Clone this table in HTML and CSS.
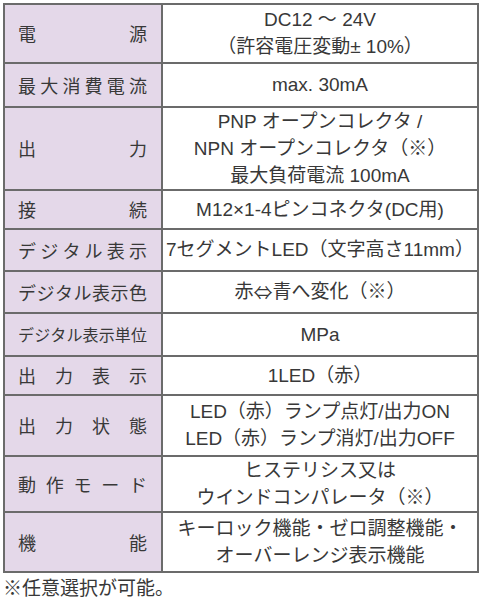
FILE: index.html
```html
<!DOCTYPE html>
<html lang="ja">
<head>
<meta charset="utf-8">
<link rel="stylesheet" href="styles.css">
</head>
<body>
<div class="spec">
  <div class="label"><span>電</span><span>源</span></div>
  <div class="value">DC12 ～ 24V<br>（許容電圧変動± 10%）</div>

  <div class="label"><span>最</span><span>大</span><span>消</span><span>費</span><span>電</span><span>流</span></div>
  <div class="value">max. 30mA</div>

  <div class="label"><span>出</span><span>力</span></div>
  <div class="value">PNP オープンコレクタ /<br>NPN オープンコレクタ（※）<br>最大負荷電流 100mA</div>

  <div class="label"><span>接</span><span>続</span></div>
  <div class="value">M12×1-4ピンコネクタ(DC用)</div>

  <div class="label"><span>デ</span><span>ジ</span><span>タ</span><span>ル</span><span>表</span><span>示</span></div>
  <div class="value">7セグメントLED（文字高さ11mm）</div>

  <div class="label"><span>デ</span><span>ジ</span><span>タ</span><span>ル</span><span>表</span><span>示</span><span>色</span></div>
  <div class="value">赤<span class="sym">⇔</span>青へ変化（※）</div>

  <div class="label small"><span>デ</span><span>ジ</span><span>タ</span><span>ル</span><span>表</span><span>示</span><span>単</span><span>位</span></div>
  <div class="value">MPa</div>

  <div class="label"><span>出</span><span>力</span><span>表</span><span>示</span></div>
  <div class="value">1LED（赤）</div>

  <div class="label"><span>出</span><span>力</span><span>状</span><span>態</span></div>
  <div class="value">LED（赤）ランプ点灯/出力ON<br>LED（赤）ランプ消灯/出力OFF</div>

  <div class="label"><span>動</span><span>作</span><span>モ</span><span>ー</span><span>ド</span></div>
  <div class="value">ヒステリシス又は<br>ウインドコンパレータ（※）</div>

  <div class="label"><span>機</span><span>能</span></div>
  <div class="value">キーロック機能・ゼロ調整機能・<br>オーバーレンジ表示機能</div>
</div>
<p class="note">※任意選択が可能。</p>
</body>
</html>
```

FILE: styles.css
```css
html, body {
  margin: 0;
  padding: 0;
  background: #ffffff;
}

body {
  font-family: "Liberation Sans", "Noto Sans CJK JP", sans-serif;
  color: #383838;
}

.spec {
  margin: 3px 0 0 3px;
  width: 476px;
  box-sizing: border-box;
  border-top: 2px solid #6b6b6b;
  border-left: 2px solid #6b6b6b;
  display: grid;
  grid-template-columns: 158px 316px;
  grid-template-rows: 59px 44px 83px 39px 42px 42px 43px 39px 61px 56px 60px;
}

.label,
.value {
  box-sizing: border-box;
  border-right: 2px solid #6b6b6b;
  border-bottom: 2px solid #6b6b6b;
  display: flex;
  align-items: center;
}

.label {
  background: #e4d8e9;
  padding: 0 14px 0 13px;
  justify-content: space-between;
  font-family: "Noto Sans CJK JP", sans-serif;
  font-size: 18px;
  line-height: 27px;
}

.label.small {
  font-size: 16px;
}

.value {
  justify-content: center;
  text-align: center;
  font-size: 19px;
  line-height: 27px;
  padding-bottom: 1px;
}

.sym {
  font-family: "Noto Sans CJK JP", sans-serif;
}

.note {
  margin: 1px 0 0 3px;
  font-family: "Noto Sans CJK JP", sans-serif;
  font-size: 19px;
  line-height: 26px;
}
```
